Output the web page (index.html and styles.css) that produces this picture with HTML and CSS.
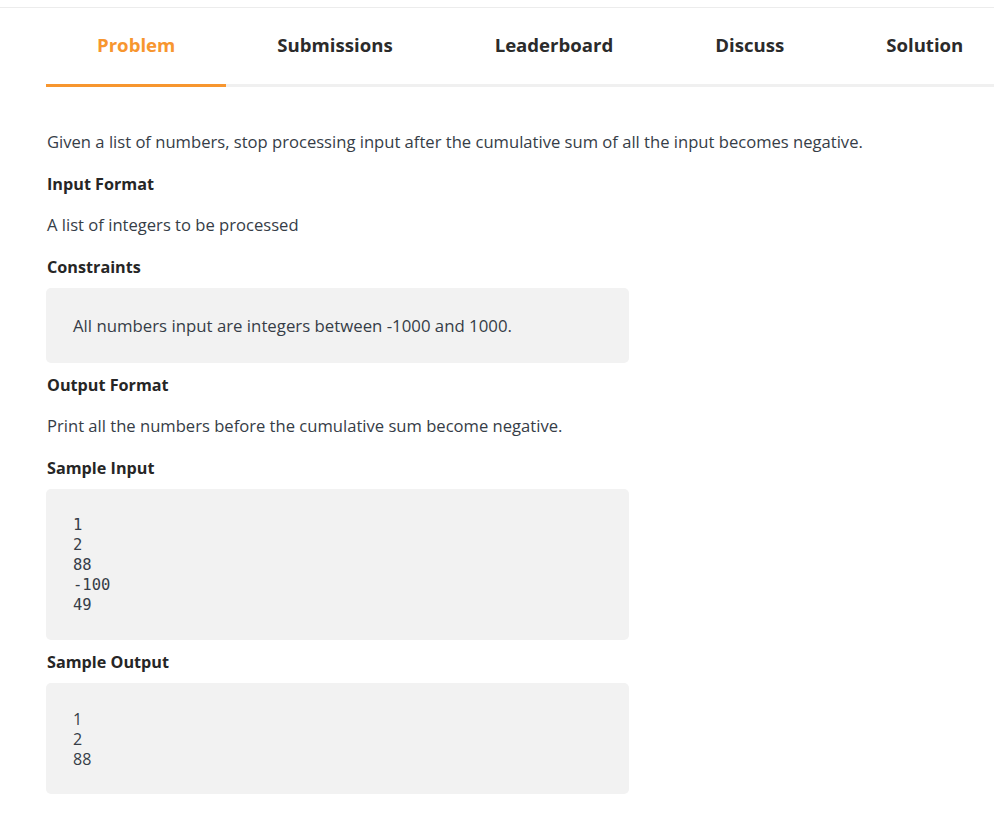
FILE: index.html
```html
<!DOCTYPE html>
<html>
<head>
<meta charset="utf-8">
<link rel="stylesheet" href="styles.css">
</head>
<body>
<div class="page">
  <nav class="tabs">
    <div class="tab active">Problem</div>
    <div class="tab">Submissions</div>
    <div class="tab">Leaderboard</div>
    <div class="tab">Discuss</div>
    <div class="tab">Solution</div>
  </nav>
  <main class="content">
    <p class="text">Given a list of numbers, stop processing input after the cumulative sum of all the input becomes negative.</p>
    <h3 class="heading">Input Format</h3>
    <p class="text">A list of integers to be processed</p>
    <h3 class="heading to-box">Constraints</h3>
    <div class="box"><p class="box-text">All numbers input are integers between -1000 and 1000.</p></div>
    <h3 class="heading">Output Format</h3>
    <p class="text">Print all the numbers before the cumulative sum become negative.</p>
    <h3 class="heading to-box">Sample Input</h3>
    <div class="box"><pre class="code">1
2
88
-100
49</pre></div>
    <h3 class="heading to-box">Sample Output</h3>
    <div class="box"><pre class="code plain">1
2
88</pre></div>
  </main>
</div>
</body>
</html>
```

FILE: styles.css
```css
* { box-sizing: border-box; }
html, body { margin: 0; padding: 0; background: #fff; }
body {
  font-family: "Open Sans", "Lato", sans-serif;
  color: #39424e;
}
.page {
  margin-top: 7px;
  border-top: 1px solid #ececec;
}
.tabs {
  display: flex;
  margin-left: 46px;
  height: 79px;
  border-bottom: 3px solid #f0f0f0;
}
.tab {
  padding: 0 51px 3px;
  margin-bottom: -3px;
  font-size: 18.6px;
  font-weight: 700;
  color: #2b2b2b;
  display: flex;
  align-items: center;
  border-bottom: 3px solid transparent;
  white-space: nowrap;
}
.tab.active {
  color: #f7962f;
  border-bottom-color: #f7962f;
}
.content {
  padding: 43px 0 0 47px;
  width: 629px;
}
.text {
  margin: 0 0 18px;
  font-size: 16.6px;
  line-height: 24px;
  color: #363d47;
  white-space: nowrap;
}
.heading {
  margin: 0 0 17px;
  font-size: 16.2px;
  line-height: 24px;
  font-weight: 700;
  color: #262626;
}
.heading.to-box { margin-bottom: 9px; }
.box {
  margin: 0 0 10px -1px;
  background: #f2f2f2;
  border-radius: 5px;
  padding: 26px 27px 25px;
}
.box-text {
  margin: 0;
  font-size: 16.8px;
  line-height: 24px;
  color: #363d47;
}
.code {
  margin: 0;
  font-family: "DejaVu Sans Mono", monospace;
  font-size: 15.5px;
  line-height: 20px;
  color: #363d47;
}
.code.plain {
  font-family: "Open Sans", "Lato", sans-serif;
  font-size: 16px;
}
```
